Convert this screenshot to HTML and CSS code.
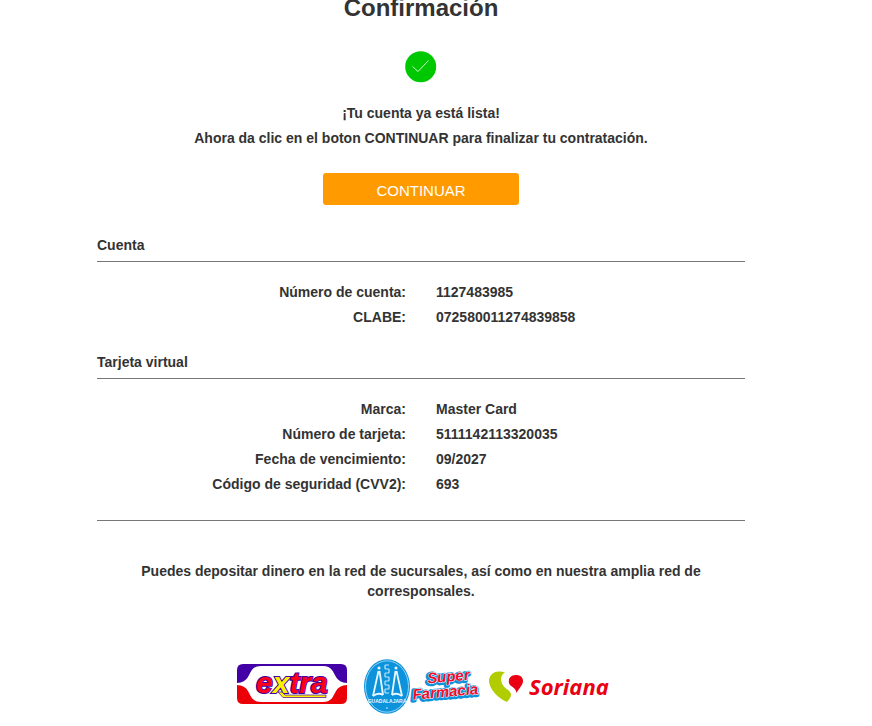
FILE: index.html
```html
<!DOCTYPE html>
<html lang="es">
<head>
<meta charset="utf-8">
<meta name="viewport" content="width=device-width, initial-scale=1">
<title>Confirmación</title>
<link rel="stylesheet" href="styles.css">
</head>
<body>
<main class="page">
  <header class="intro">
    <h1 class="title">Confirmación</h1>
    <svg class="check" viewBox="0 0 32 32" aria-hidden="true">
      <circle cx="15.700" cy="15.700" r="15.500" fill="#00c800"/>
      <path d="M7.500 15.500 13 20.500 23.500 9.500" fill="none" stroke="#d5f7d5" stroke-width="1"/>
    </svg>
    <p class="message">¡Tu cuenta ya está lista!</p>
    <p class="message">Ahora da clic en el boton CONTINUAR para finalizar tu contratación.</p>
    <button class="continue" type="button">CONTINUAR</button>
  </header>

  <section class="group">
    <h2 class="group-title">Cuenta</h2>
    <dl class="details">
      <dt>Número de cuenta:</dt><dd>1127483985</dd>
      <dt>CLABE:</dt><dd>072580011274839858</dd>
    </dl>
  </section>

  <section class="group">
    <h2 class="group-title">Tarjeta virtual</h2>
    <dl class="details">
      <dt>Marca:</dt><dd>Master Card</dd>
      <dt>Número de tarjeta:</dt><dd>5111142113320035</dd>
      <dt>Fecha de vencimiento:</dt><dd>09/2027</dd>
      <dt>Código de seguridad (CVV2):</dt><dd>693</dd>
    </dl>
  </section>

  <footer class="deposit">
    <p class="deposit-text">Puedes depositar dinero en la red de sucursales, así como en nuestra amplia red de corresponsales.</p>
    <div class="logos">
      <svg class="logo-extra" viewBox="0 0 110 46">
        <path d="M6 0H104Q110 0 110 6V19H0V6Q0 0 6 0Z" fill="#4200a6"/>
        <path d="M0 21H110V34Q110 40 104 40H6Q0 40 0 34Z" fill="#ec0008"/>
        <path d="M24 2H86C95 2 96 8 99 13Q102 18.500 110 19V21Q102 21.500 99 27C96 32 95 38 86 38H24C15 38 14 32 11 27Q8 21.500 0 21V19Q8 18.500 11 13C14 8 15 2 24 2Z" fill="#fff"/>
        <text class="extra-text" x="19" y="29">e<tspan class="extra-x">x</tspan>tra</text>
        <path d="M41 28H45L48 31H89V33.500H46Z" fill="#fff200" stroke="#4200a6" stroke-width=".7"/>
      </svg>
      <svg class="logo-farmacia" viewBox="0 0 120 55">
        <ellipse cx="23" cy="27.500" rx="23" ry="27.200" fill="#0d93dc"/>
        <ellipse cx="23" cy="27.500" rx="21.500" ry="25.700" fill="none" stroke="#b6e2fb" stroke-width=".8"/>
        <path d="M14.500 12 9 37M15.500 12 19 36M32.500 12 38 37M31.500 12 28 36" fill="none" stroke="#e8f7ff" stroke-width="1.800"/>
        <circle cx="15" cy="9" r="1.500" fill="#e8f7ff"/>
        <circle cx="32" cy="9" r="1.500" fill="#e8f7ff"/>
        <path d="M9 37Q14 33 19 36M28 36Q33 33 38 37" fill="none" stroke="#e8f7ff" stroke-width="1.800"/>
        <path d="M21 6H25M21 10H25M21 14H25M21 18H25M21 22H25M21 26H25M21 30H25M21 34H25M21 6V10M25 10V14M21 14V18M25 18V22M21 22V26M25 26V30M21 30V34" stroke="#bce6fc" stroke-width="1.200"/>
        <text class="city-text" x="23" y="44" text-anchor="middle">GUADALAJARA</text>
        <circle cx="23" cy="49" r=".8" fill="#e8f7ff"/>
        <g transform="rotate(-5 80 28)">
          <text class="super-shadow" x="63" y="24">Super</text>
          <text class="super-shadow" x="47" y="39">Farmacia</text>
          <text class="super-text" x="64" y="23">Super</text>
          <text class="super-text" x="48" y="38">Farmacia</text>
        </g>
      </svg>
      <svg class="logo-soriana" viewBox="0 0 124 32">
        <path d="M11 .5C4 0 0 4.500 0 10.500 1 18.500 8 26.500 18 31 20 28.500 22 26.500 22 23.500 22 19.500 15 17.500 13 12.500 11 8.500 12 3.500 16 1.500Q13 .5 11 .5Z" fill="#b1cc00"/>
        <path d="M27 4C22 4 19 7 20 12 21 16 27 16 27.500 22 30 17.500 34 14 34 10 34 6 31 4 27 4Z" fill="#ea0012"/>
        <text class="soriana-text" x="40" y="24">Soriana</text>
      </svg>
    </div>
  </footer>
</main>
</body>
</html>
```

FILE: styles.css
```css
* {
  box-sizing: border-box;
}

body {
  margin: 0;
  padding: 0 30px 0 0;
  background: #fff;
  color: #333;
  font: bold 14px/20px "Liberation Sans", Arial, sans-serif;
}

h1, h2, p, dl, dd {
  margin: 0;
}

.page {
  width: 100%;
  max-width: 648px;
  margin: 0 auto;
}

.intro {
  display: flex;
  flex-direction: column;
  align-items: center;
  text-align: center;
}

.title {
  font-size: 24px;
  line-height: 16px;
}

.check {
  width: 32px;
  height: 32px;
  margin: 35px 0 20px;
}

.message {
  margin-bottom: 5px;
}

.continue {
  width: 196px;
  height: 32px;
  margin-top: 20px;
  padding: 3px 0 0;
  border: 0;
  border-radius: 3px;
  background: #ff9b00;
  color: #fff;
  font: 15px/20px "Liberation Sans", Arial, sans-serif;
  cursor: pointer;
}

.group {
  margin-top: 30px;
}

.group + .group {
  margin-top: 25px;
}

.group-title {
  padding-bottom: 6px;
  border-bottom: 1px solid #777;
  font-size: 14px;
  line-height: 20px;
}

.details {
  display: grid;
  grid-template-columns: 309px 1fr;
  gap: 5px 30px;
  margin-top: 20px;
}

.details dt {
  text-align: right;
}

.deposit {
  margin-top: 26px;
  padding-top: 40px;
  border-top: 1px solid #777;
  text-align: center;
}

.deposit-text {
  padding: 0 30px;
}

.logos {
  display: flex;
  justify-content: center;
  align-items: center;
  margin-top: 58px;
  padding-bottom: 30px;
}

.logo-extra {
  width: 110px;
  height: 46px;
  margin-right: 17px;
}

.logo-farmacia {
  width: 120px;
  height: 55px;
  margin-right: 5px;
}

.logo-soriana {
  width: 124px;
  height: 32px;
  margin-right: -8px;
}

.extra-text {
  fill: #ff0018;
  stroke: #4200a6;
  stroke-width: 2px;
  paint-order: stroke;
  font: italic bold 30px "Liberation Sans", Arial, sans-serif;
}

.extra-x {
  fill: #fff200;
}

.city-text {
  fill: #e8f7ff;
  font: bold 5px "Liberation Sans", Arial, sans-serif;
}

.super-text,
.super-shadow {
  stroke-linejoin: round;
  paint-order: stroke;
  font: italic bold 15px "Liberation Sans", Arial, sans-serif;
}

.super-text {
  fill: #ee0c2a;
  stroke: #fff;
  stroke-width: 1px;
}

.super-shadow {
  fill: #0d93dc;
  stroke: #0d93dc;
  stroke-width: 4px;
}

.soriana-text {
  fill: #ea0012;
  font: italic bold 22px "Open Sans", sans-serif;
}
```
